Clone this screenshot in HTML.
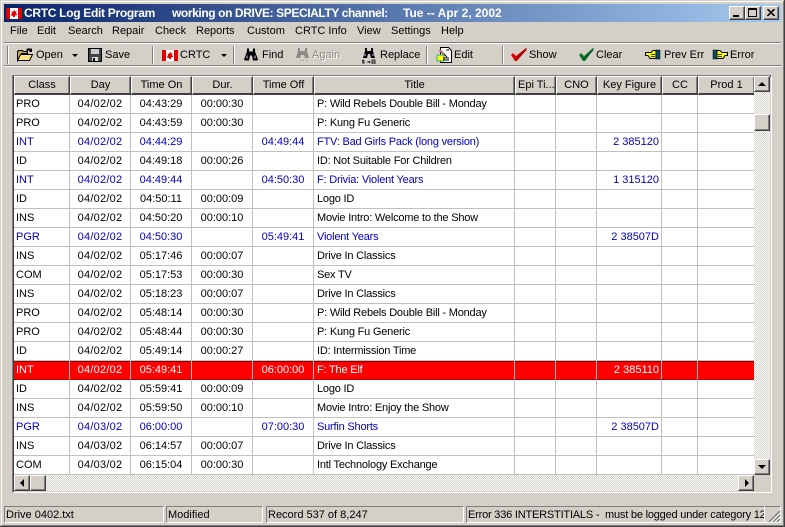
<!DOCTYPE html>
<html><head><meta charset="utf-8"><style>
html,body{margin:0;padding:0;background:#d4d0c8}
body{width:785px;height:527px;position:relative;overflow:hidden;font:11px/14px "Liberation Sans",sans-serif;color:#000}
.a{position:absolute}
.t{position:absolute;white-space:nowrap}
#title{left:4px;top:4px;width:777px;height:18px;background:linear-gradient(90deg,#0a246a,#a6caf0)}
.tt{color:#fff;font:bold 12px/18px "Liberation Sans",sans-serif;top:4px}
.m{top:24px;font-size:11px}
.tb{top:48px}
.gr{color:#8b8b85}
.sep{position:absolute;top:46px;width:1px;height:18px;background:#808080;border-right:1px solid #fff}
.btn{position:absolute;box-sizing:border-box;background:#d4d0c8;border:1px solid;border-color:#fff #404040 #404040 #fff;box-shadow:inset -1px -1px 0 #808080}
.dith{position:absolute;background:conic-gradient(#fff 25%,#d4d0c8 0 50%,#fff 0 75%,#d4d0c8 0) 0 0/2px 2px}
table{position:absolute;left:14px;top:76px;width:740px;table-layout:fixed;border-collapse:separate;border-spacing:0;background:#fff;font-size:11px}
th{height:16px;padding:0;font-weight:normal;background:#d4d0c8;border-top:1px solid #fff;border-left:1px solid #fff;border-right:1px solid #404040;border-bottom:2px solid #404040;box-shadow:inset -1px 0 0 #808080;box-sizing:content-box;overflow:hidden;white-space:nowrap;line-height:15px}
td{height:18px;padding:0;border-right:1px solid #c0c0c0;border-bottom:1px solid #c0c0c0;overflow:hidden;white-space:nowrap;text-align:center;line-height:17px}
td:nth-child(1){text-align:left;padding-left:2px}
td:nth-child(2){letter-spacing:.25px}
td:nth-child(6){text-align:left;padding-left:3px;letter-spacing:-.2px}
td:nth-child(9){text-align:right;padding-right:2px}
.b td{color:#0000c0}
.r td{background:#f00;color:#fff;border-bottom:1px dotted #600;box-shadow:inset 0 1px 0 #800}
.sb{position:absolute;top:506px;height:17px;box-sizing:border-box;border:1px solid;border-color:#808080 #fff #fff #808080;padding-left:1px;line-height:16px;white-space:nowrap;overflow:hidden}
</style></head><body>
<div class="a" style="left:1px;top:1px;width:783px;height:1px;background:#fff"></div>
<div class="a" style="left:1px;top:1px;width:1px;height:524px;background:#fff"></div>
<div class="a" style="left:783px;top:1px;width:1px;height:524px;background:#808080"></div>
<div class="a" style="left:784px;top:0;width:1px;height:527px;background:#404040"></div>
<div class="a" style="left:1px;top:525px;width:783px;height:1px;background:#808080"></div>
<div class="a" style="left:0;top:526px;width:785px;height:1px;background:#404040"></div>

<div class="a" id="title"></div>
<svg class="a" style="left:6px;top:8px" width="16" height="11" viewBox="0 0 16 11"><rect width="16" height="11" fill="#fff"/><rect width="4" height="11" fill="#e00000"/><rect x="12" width="4" height="11" fill="#e00000"/><path d="M8 1.500l1 2 1.500-.5-.5 3 1-.5v1.500l-2 .5v1.500h-2V8l-2-.5V6l1 .5-.5-3L7 4z" fill="#e00000"/></svg>
<div class="t tt" style="left:24px;letter-spacing:-.3px">CRTC Log Edit Program</div>
<div class="t tt" style="left:172px;letter-spacing:-.4px">working on DRIVE: SPECIALTY channel:</div>
<div class="t tt" style="left:403px">Tue -- Apr 2, 2002</div>
<div class="btn" style="left:729px;top:6px;width:16px;height:14px"></div>
<div class="a" style="left:733px;top:15px;width:6px;height:2px;background:#000"></div>
<div class="btn" style="left:745px;top:6px;width:16px;height:14px"></div>
<div class="a" style="left:748px;top:8px;width:9px;height:9px;box-sizing:border-box;border:1px solid #000;border-top-width:2px"></div>
<div class="btn" style="left:763px;top:6px;width:16px;height:14px"></div>
<svg class="a" style="left:767px;top:9px" width="8" height="8"><path d="M0 0l7 7M1 0l7 7M7 0L0 7M8 0L1 7" stroke="#000" stroke-width=".8"/></svg>

<span class="t m" style="left:10px">File</span><span class="t m" style="left:37px">Edit</span><span class="t m" style="left:68px">Search</span><span class="t m" style="left:112px">Repair</span><span class="t m" style="left:155px">Check</span><span class="t m" style="left:196px">Reports</span><span class="t m" style="left:247px">Custom</span><span class="t m" style="left:295px">CRTC Info</span><span class="t m" style="left:357px">View</span><span class="t m" style="left:391px">Settings</span><span class="t m" style="left:441px">Help</span>

<div class="a" style="left:4px;top:42px;width:777px;height:1px;background:#808080"></div>
<div class="a" style="left:4px;top:43px;width:777px;height:1px;background:#fff"></div>
<div class="a" style="left:4px;top:65px;width:777px;height:1px;background:#808080"></div>
<div class="a" style="left:4px;top:66px;width:777px;height:1px;background:#fff"></div>
<div class="a" style="left:7px;top:46px;width:1px;height:18px;background:#808080;border-right:1px solid #fff"></div>

<svg class="a" style="left:17px;top:47px" width="17" height="15" viewBox="0 0 17 15"><path d="M.500 13.500v-9l1-1h4l1 1h4v2h-6z" fill="#c8a84a" stroke="#000"/><path d="M.500 13.500l3-6h12l-3 6z" fill="#ffe680" stroke="#000"/><path d="M9 3q2-3 5-1l1-1v4h-3l1-1q-2-1-3 0" fill="#000"/></svg>
<span class="t tb" style="left:36px">Open</span>
<div class="a" style="left:72px;top:54px;border:3px solid transparent;border-top-color:#000;border-bottom:0"></div>
<svg class="a" style="left:88px;top:48px" width="14" height="14" viewBox="0 0 14 14"><path d="M.500.500h13v13H.500z" fill="#444" stroke="#000"/><rect x="3" y="1" width="8" height="5" fill="#ccc"/><rect x="4" y="9" width="6" height="4" fill="#ddd"/><rect x="5" y="10" width="2" height="3" fill="#000"/></svg>
<span class="t tb" style="left:105px">Save</span>
<div class="sep" style="left:152px"></div>
<svg class="a" style="left:162px;top:50px" width="16" height="11" viewBox="0 0 16 11"><rect width="16" height="11" fill="#fff"/><rect width="4" height="11" fill="#e00000"/><rect x="12" width="4" height="11" fill="#e00000"/><path d="M8 1.500l1 2 1.500-.5-.5 3 1-.5v1.500l-2 .5v1.500h-2V8l-2-.5V6l1 .5-.5-3L7 4z" fill="#e00000"/></svg>
<span class="t tb" style="left:180px">CRTC</span>
<div class="a" style="left:221px;top:54px;border:3px solid transparent;border-top-color:#000;border-bottom:0"></div>
<div class="sep" style="left:233px"></div>
<svg class="a" style="left:243px;top:47px" width="16" height="15" viewBox="0 0 16 14"><path d="M4 1h2v3h4V1h2v3l3 8-1 1H10L9 8H7L6 13H2L1 12l3-8z" fill="#000"/><rect x="3" y="8" width="2" height="3" fill="#668"/><rect x="11" y="8" width="2" height="3" fill="#668"/></svg>
<span class="t tb" style="left:262px">Find</span>
<svg class="a" style="left:296px;top:47px" width="14" height="16" viewBox="0 0 14 16"><path d="M2 1h2v3h5V1h2v3l2 7H9L8 8H5l-1 3H0l2-7z" fill="#8b8b85"/><path d="M4 13h1v1H4zM7 13h1v1H7zM10 13h1v1h-1z" fill="#8b8b85"/></svg>
<span class="t tb gr" style="left:312px;text-shadow:1px 1px 0 #fff">Again</span>
<svg class="a" style="left:362px;top:47px" width="14" height="17" viewBox="0 0 14 17"><path d="M3 1h2v3h4V1h2v3l2 7H9L8 7H6l-1 4H1l2-7z"/><rect x="2" y="7" width="2" height="2" fill="#668"/><rect x="10" y="7" width="2" height="2" fill="#668"/><path d="M0 17v-3l1-1 1 1v3M0 15h2M5 15h3M7 14l1 1-1 1M10 13h3v4h-3zM10 15h3" fill="none" stroke="#000" stroke-width=".8"/></svg>
<span class="t tb" style="left:380px">Replace</span>
<div class="sep" style="left:426px"></div>
<svg class="a" style="left:436px;top:47px" width="17" height="16" viewBox="0 0 17 16"><path d="M4.500.500h8l3 3v12h-11z" fill="#fff" stroke="#000"/><path d="M1 8h7v6H1z" fill="#ff0"/><path d="M1 8h7v6H1z" fill="none" stroke="#3a8" /><path d="M6 5l5 5M7 11h6M7 13h6M10 3h3" stroke="#000"/><path d="M4 2l5 5-2 1-4-4z" fill="#a66"/></svg>
<span class="t tb" style="left:454px">Edit</span>
<div class="sep" style="left:502px"></div>
<svg class="a" style="left:510px;top:47px" width="18" height="15" viewBox="0 0 18 15"><path d="M1 8l2-2 3 3 10-8 1 1L7 14h-2z" fill="#e00000"/><path d="M5 13L16 3" stroke="#600" fill="none"/></svg>
<span class="t tb" style="left:529px">Show</span>
<svg class="a" style="left:578px;top:47px" width="17" height="15" viewBox="0 0 17 15"><path d="M1 8l2-2 3 3 9-8 1 1L7 14h-2z" fill="#0a7a20"/><path d="M5 13L15 3" stroke="#044" fill="none"/></svg>
<span class="t tb" style="left:596px">Clear</span>
<svg class="a" style="left:645px;top:49px" width="16" height="11" viewBox="0 0 16 11"><path d="M.500 3.500H6l2-2h3v8H5l-2-3H.500z" fill="#ff0" stroke="#000"/><path d="M6 5.500h4M6 7.500h4" stroke="#000" stroke-width=".7"/><rect x="11" y="1" width="4" height="9" fill="#146" stroke="#000" stroke-width=".5"/></svg>
<span class="t tb" style="left:664px">Prev Err</span>
<svg class="a" style="left:712px;top:49px" width="16" height="11" viewBox="0 0 16 11"><path d="M15.500 3.500H10l-2-2H5v8h6l2-3h2.500z" fill="#ff0" stroke="#000"/><path d="M6 5.500h4M6 7.500h4" stroke="#000" stroke-width=".7"/><rect x="1" y="1" width="4" height="9" fill="#146" stroke="#000" stroke-width=".5"/></svg>
<span class="t tb" style="left:730px">Error</span>

<div class="a" style="left:12px;top:75px;width:760px;height:418px;box-sizing:border-box;border:1px solid;border-color:#808080 #fff #fff #808080"></div>
<div class="a" style="left:13px;top:76px;width:758px;height:416px;box-sizing:border-box;border-left:1px solid #404040;border-top:1px solid #404040;background:#d4d0c8"></div>
<table>
<colgroup><col style="width:56px"><col style="width:61px"><col style="width:61px"><col style="width:61px"><col style="width:61px"><col style="width:201px"><col style="width:41px"><col style="width:41px"><col style="width:65px"><col style="width:36px"><col style="width:57px"></colgroup>
<thead><tr><th>Class</th><th>Day</th><th>Time On</th><th>Dur.</th><th>Time Off</th><th>Title</th><th style="text-align:left;padding-left:2px">Epi Ti...</th><th>CNO</th><th>Key Figure</th><th>CC</th><th>Prod 1</th></tr></thead>
<tbody>
<tr><td>PRO</td><td>04/02/02</td><td>04:43:29</td><td>00:00:30</td><td></td><td>P: Wild Rebels Double Bill - Monday</td><td></td><td></td><td></td><td></td><td></td></tr>
<tr><td>PRO</td><td>04/02/02</td><td>04:43:59</td><td>00:00:30</td><td></td><td>P: Kung Fu Generic</td><td></td><td></td><td></td><td></td><td></td></tr>
<tr class="b"><td>INT</td><td>04/02/02</td><td>04:44:29</td><td></td><td>04:49:44</td><td>FTV: Bad Girls Pack (long version)</td><td></td><td></td><td>2 385120</td><td></td><td></td></tr>
<tr><td>ID</td><td>04/02/02</td><td>04:49:18</td><td>00:00:26</td><td></td><td>ID: Not Suitable For Children</td><td></td><td></td><td></td><td></td><td></td></tr>
<tr class="b"><td>INT</td><td>04/02/02</td><td>04:49:44</td><td></td><td>04:50:30</td><td>F: Drivia: Violent Years</td><td></td><td></td><td>1 315120</td><td></td><td></td></tr>
<tr><td>ID</td><td>04/02/02</td><td>04:50:11</td><td>00:00:09</td><td></td><td>Logo ID</td><td></td><td></td><td></td><td></td><td></td></tr>
<tr><td>INS</td><td>04/02/02</td><td>04:50:20</td><td>00:00:10</td><td></td><td>Movie Intro: Welcome to the Show</td><td></td><td></td><td></td><td></td><td></td></tr>
<tr class="b"><td>PGR</td><td>04/02/02</td><td>04:50:30</td><td></td><td>05:49:41</td><td>Violent Years</td><td></td><td></td><td>2 38507D</td><td></td><td></td></tr>
<tr><td>INS</td><td>04/02/02</td><td>05:17:46</td><td>00:00:07</td><td></td><td>Drive In Classics</td><td></td><td></td><td></td><td></td><td></td></tr>
<tr><td>COM</td><td>04/02/02</td><td>05:17:53</td><td>00:00:30</td><td></td><td>Sex TV</td><td></td><td></td><td></td><td></td><td></td></tr>
<tr><td>INS</td><td>04/02/02</td><td>05:18:23</td><td>00:00:07</td><td></td><td>Drive In Classics</td><td></td><td></td><td></td><td></td><td></td></tr>
<tr><td>PRO</td><td>04/02/02</td><td>05:48:14</td><td>00:00:30</td><td></td><td>P: Wild Rebels Double Bill - Monday</td><td></td><td></td><td></td><td></td><td></td></tr>
<tr><td>PRO</td><td>04/02/02</td><td>05:48:44</td><td>00:00:30</td><td></td><td>P: Kung Fu Generic</td><td></td><td></td><td></td><td></td><td></td></tr>
<tr><td>ID</td><td>04/02/02</td><td>05:49:14</td><td>00:00:27</td><td></td><td>ID: Intermission Time</td><td></td><td></td><td></td><td></td><td></td></tr>
<tr class="r"><td>INT</td><td>04/02/02</td><td>05:49:41</td><td></td><td>06:00:00</td><td>F: The Elf</td><td></td><td></td><td>2 385110</td><td></td><td></td></tr>
<tr><td>ID</td><td>04/02/02</td><td>05:59:41</td><td>00:00:09</td><td></td><td>Logo ID</td><td></td><td></td><td></td><td></td><td></td></tr>
<tr><td>INS</td><td>04/02/02</td><td>05:59:50</td><td>00:00:10</td><td></td><td>Movie Intro: Enjoy the Show</td><td></td><td></td><td></td><td></td><td></td></tr>
<tr class="b"><td>PGR</td><td>04/03/02</td><td>06:00:00</td><td></td><td>07:00:30</td><td>Surfin Shorts</td><td></td><td></td><td>2 38507D</td><td></td><td></td></tr>
<tr><td>INS</td><td>04/03/02</td><td>06:14:57</td><td>00:00:07</td><td></td><td>Drive In Classics</td><td></td><td></td><td></td><td></td><td></td></tr>
<tr><td>COM</td><td>04/03/02</td><td>06:15:04</td><td>00:00:30</td><td></td><td>Intl Technology Exchange</td><td></td><td></td><td></td><td></td><td></td></tr>
</tbody></table>

<div class="dith" style="left:754px;top:92px;width:16px;height:367px"></div>
<div class="btn" style="left:754px;top:76px;width:16px;height:16px"></div>
<div class="a" style="left:758px;top:82px;border:4px solid transparent;border-bottom-color:#000;border-top:0"></div>
<div class="btn" style="left:754px;top:114px;width:16px;height:17px"></div>
<div class="btn" style="left:754px;top:459px;width:16px;height:16px"></div>
<div class="a" style="left:758px;top:465px;border:4px solid transparent;border-top-color:#000;border-bottom:0"></div>
<div class="dith" style="left:14px;top:475px;width:724px;height:16px"></div>
<div class="btn" style="left:14px;top:475px;width:16px;height:16px"></div>
<div class="a" style="left:20px;top:479px;border:4px solid transparent;border-right-color:#000;border-left:0"></div>
<div class="btn" style="left:30px;top:475px;width:16px;height:16px"></div>
<div class="btn" style="left:738px;top:475px;width:16px;height:16px"></div>
<div class="a" style="left:745px;top:479px;border:4px solid transparent;border-left-color:#000;border-right:0"></div>

<div class="sb" style="left:4px;width:160px">Drive 0402.txt</div>
<div class="sb" style="left:166px;width:97px">Modified</div>
<div class="sb" style="left:266px;width:198px">Record 537 of 8,247</div>
<div class="sb" style="left:466px;width:299px;letter-spacing:-.2px">Error 336 INTERSTITIALS -&nbsp; must be logged under category 12</div>
<div class="sb" style="left:765px;width:16px;border-left:0"></div>
<svg class="a" style="left:768px;top:510px" width="13" height="13"><path d="M12 1L1 12M12 5L5 12M12 9L9 12" stroke="#808080" stroke-width="1.500"/><path d="M12 3L3 12M12 7L7 12M12 11L11 12" stroke="#fff"/></svg>
</body></html>
